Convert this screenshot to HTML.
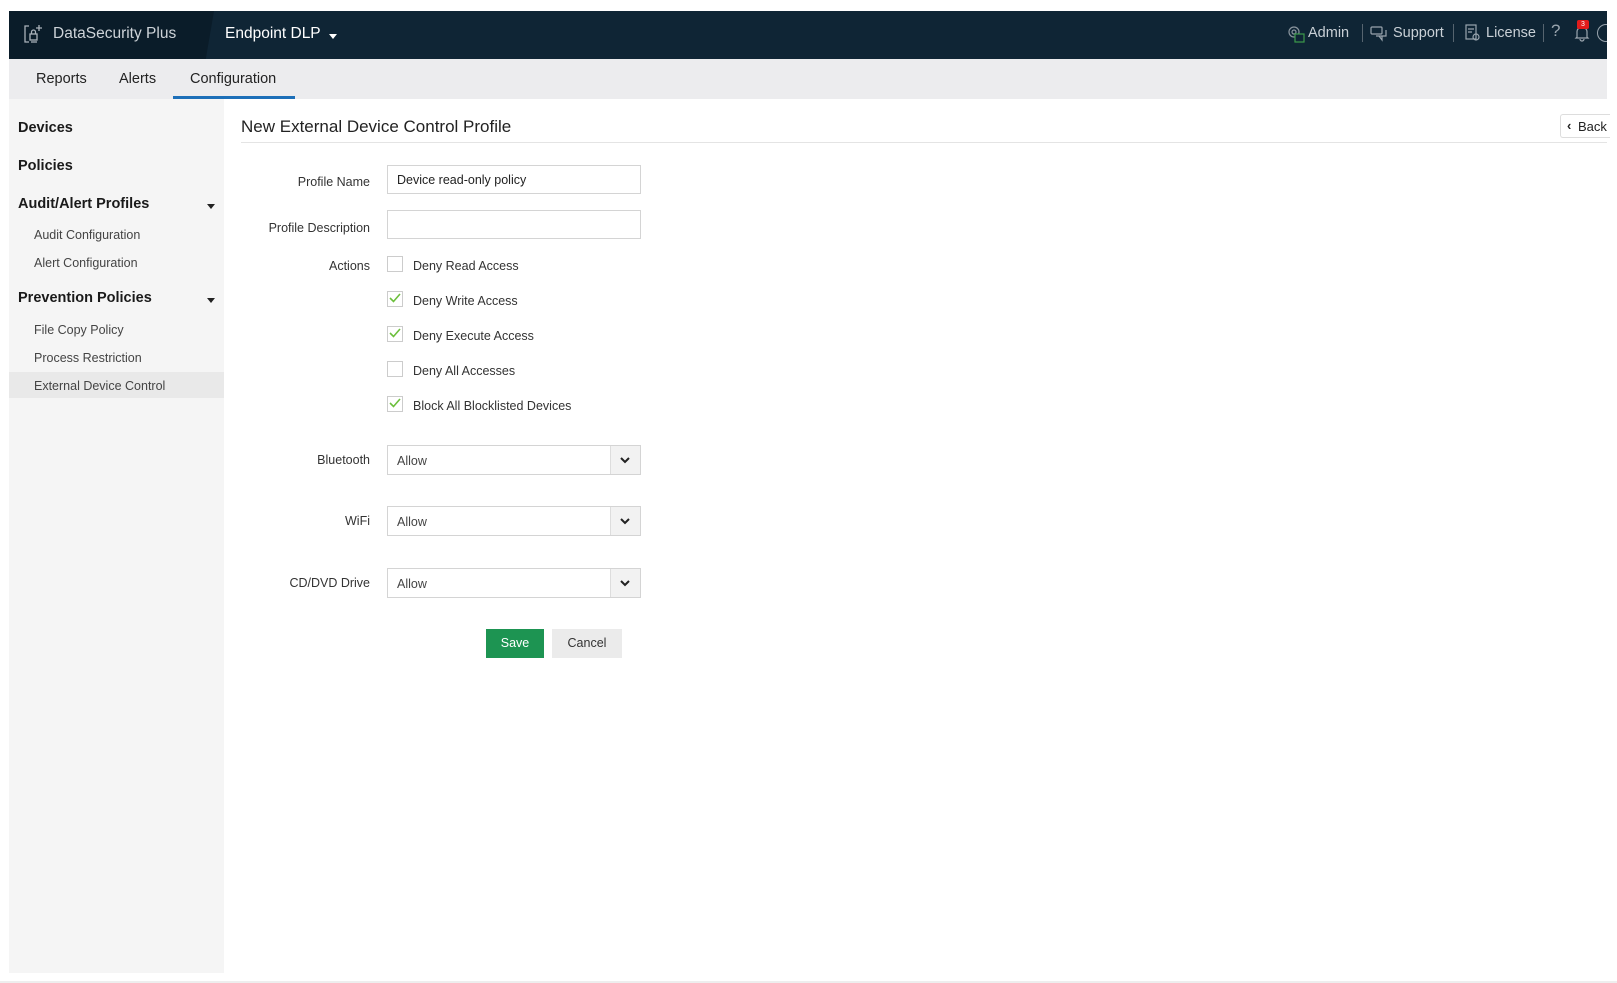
<!DOCTYPE html>
<html><head><style>
*{margin:0;padding:0;box-sizing:border-box}
body{width:1617px;height:983px;background:#fff;font-family:"Liberation Sans",sans-serif;position:relative;overflow:hidden;color:#222}
.a{position:absolute;white-space:nowrap}
.top{left:9px;top:11px;width:1598px;height:48px;background:#0f2535}
.logo{left:9px;top:11px;width:205px;height:48px;background:#0a1c29;clip-path:polygon(0 0,100% 0,96% 100%,0 100%)}
.nav{left:9px;top:59px;width:1598px;height:40px;background:#ececee}
.side{left:9px;top:99px;width:215px;height:874px;background:#f5f5f5}
.sh{font-size:14.5px;font-weight:bold;color:#1a1a1a;left:18px}
.si{font-size:12.5px;color:#444;left:34px}
.lbl{font-size:12.5px;color:#333;right:1247px;text-align:right}
.in{left:387px;width:254px;height:29px;border:1px solid #d4d4d4;background:#fff;font-size:12.5px;padding:7px 9px;color:#222}
.cb{left:387px;width:16px;height:16px;border:1px solid #ccc;background:#fff}
.cl{left:413px;font-size:12.5px;color:#333}
.sel{left:387px;width:254px;height:30px;border:1px solid #d4d4d4;background:#fff;font-size:12.5px;padding:8px 9px;color:#444}
.sel i{position:absolute;right:0;top:0;width:30px;height:28px;background:#f2f2f2;border-left:1px solid #ddd}
.tri{width:0;height:0;border-left:4px solid transparent;border-right:4px solid transparent;border-top:5px solid #222}
</style></head><body>
<div class="a top"></div><div class="a logo"></div>
<svg class="a" style="left:23px;top:23px" width="22" height="22" viewBox="0 0 22 22" fill="none" stroke="#aab2ba" stroke-width="1.3"><path d="M6 3H2v16h4M8 19h6"/><rect x="7" y="11" width="7" height="6"/><path d="M8.5 11V9a2 2 0 0 1 4 0v2"/><path d="M16 2v6M13 5h6"/></svg>
<div class="a" style="left:53px;top:25px;font-size:15.5px;color:#cdd3d8">DataSecurity Plus</div>
<div class="a" style="left:225px;top:25px;font-size:15.5px;color:#fff">Endpoint DLP</div>
<div class="a tri" style="left:329px;top:34px;border-top-color:#fff"></div>
<svg class="a" style="left:1286px;top:24px" width="20" height="20" viewBox="0 0 20 20" fill="none" stroke="#8a959e" stroke-width="1.2"><circle cx="8" cy="8" r="5"/><circle cx="8" cy="8" r="2"/><rect x="9" y="10" width="9" height="8" fill="#0f2535" stroke="#3c9a4a"/></svg>
<div class="a" style="left:1308px;top:25px;font-size:14.5px;color:#c9d0d6">Admin</div>
<div class="a" style="left:1362px;top:24px;width:1px;height:18px;background:#56646f"></div>
<svg class="a" style="left:1370px;top:26px" width="19" height="16" viewBox="0 0 19 16" fill="none" stroke="#9aa5ae" stroke-width="1.2"><rect x="1" y="1" width="11" height="7" rx="1"/><path d="M6 10h10V4M12 10v4l-3-4"/></svg>
<div class="a" style="left:1393px;top:25px;font-size:14.5px;color:#c9d0d6">Support</div>
<div class="a" style="left:1453px;top:24px;width:1px;height:18px;background:#56646f"></div>
<svg class="a" style="left:1465px;top:24px" width="16" height="19" viewBox="0 0 16 19" fill="none" stroke="#9aa5ae" stroke-width="1.2"><rect x="1" y="1" width="10" height="14"/><path d="M3 5h6M3 8h4"/><circle cx="11" cy="13" r="3"/></svg>
<div class="a" style="left:1486px;top:25px;font-size:14.5px;color:#c9d0d6">License</div>
<div class="a" style="left:1543px;top:24px;width:1px;height:18px;background:#56646f"></div>
<div class="a" style="left:1551px;top:21px;font-size:17px;color:#9aa5ae">?</div>
<svg class="a" style="left:1574px;top:24px" width="16" height="18" viewBox="0 0 16 18" fill="none" stroke="#9aa5ae" stroke-width="1.2"><path d="M3 13V8a5 5 0 0 1 10 0v5l1 1H2zM6 15a2 2 0 0 0 4 0"/></svg>
<div class="a" style="left:1577px;top:20px;width:12px;height:9px;background:#e21b1b;border-radius:2px;font-size:7px;color:#fff;text-align:center;line-height:9px">3</div>
<div class="a" style="left:1597px;top:24px;width:18px;height:18px;border:1.3px solid #9aa5ae;border-radius:50%"></div>
<div class="a" style="left:1607px;top:0;width:10px;height:983px;background:#fff"></div>

<div class="a nav"></div>
<div class="a" style="left:36px;top:71px;font-size:14.5px;color:#222">Reports</div>
<div class="a" style="left:119px;top:71px;font-size:14.5px;color:#222">Alerts</div>
<div class="a" style="left:190px;top:71px;font-size:14.5px;color:#222">Configuration</div>
<div class="a" style="left:173px;top:96px;width:122px;height:3px;background:#1d6fb8"></div>

<div class="a side"></div>
<div class="a sh" style="top:120px">Devices</div>
<div class="a sh" style="top:158px">Policies</div>
<div class="a sh" style="top:196px">Audit/Alert Profiles</div>
<div class="a tri" style="left:207px;top:204px"></div>
<div class="a si" style="top:228px">Audit Configuration</div>
<div class="a si" style="top:256px">Alert Configuration</div>
<div class="a sh" style="top:290px">Prevention Policies</div>
<div class="a tri" style="left:207px;top:298px"></div>
<div class="a si" style="top:323px">File Copy Policy</div>
<div class="a si" style="top:351px">Process Restriction</div>
<div class="a" style="left:9px;top:372px;width:215px;height:26px;background:#e9e9e9"></div>
<div class="a si" style="top:379px">External Device Control</div>

<div class="a" style="left:241px;top:117px;font-size:17px;color:#222">New External Device Control Profile</div>
<div class="a" style="left:241px;top:142px;width:1366px;height:1px;background:#e4e4e4"></div>
<div class="a" style="left:1560px;top:114px;width:50px;height:24px;border:1px solid #ddd;border-right:none;border-radius:3px 0 0 3px;background:#fff;font-size:13px;padding:4px 0 0 17px;color:#222">Back</div>
<div class="a" style="left:1567px;top:118px;font-size:13px;font-weight:bold">&#8249;</div>

<div class="a lbl" style="top:175px">Profile Name</div>
<div class="a in" style="top:165px">Device read-only policy</div>
<div class="a lbl" style="top:221px">Profile Description</div>
<div class="a in" style="top:210px"></div>
<div class="a lbl" style="top:259px">Actions</div>

<div class="a cb" style="top:256px"></div><div class="a cl" style="top:259px">Deny Read Access</div>
<div class="a cb" style="top:291px"></div><div class="a cl" style="top:294px">Deny Write Access</div>
<div class="a cb" style="top:326px"></div><div class="a cl" style="top:329px">Deny Execute Access</div>
<div class="a cb" style="top:361px"></div><div class="a cl" style="top:364px">Deny All Accesses</div>
<div class="a cb" style="top:396px"></div><div class="a cl" style="top:399px">Block All Blocklisted Devices</div>
<svg class="a" style="left:388px;top:291px" width="14" height="14"><path d="M2 7l3.5 3.5L12 3" fill="none" stroke="#6cbf3c" stroke-width="1.6"/></svg>
<svg class="a" style="left:388px;top:326px" width="14" height="14"><path d="M2 7l3.5 3.5L12 3" fill="none" stroke="#6cbf3c" stroke-width="1.6"/></svg>
<svg class="a" style="left:388px;top:396px" width="14" height="14"><path d="M2 7l3.5 3.5L12 3" fill="none" stroke="#6cbf3c" stroke-width="1.6"/></svg>

<div class="a lbl" style="top:453px">Bluetooth</div>
<div class="a sel" style="top:445px">Allow<i></i></div>
<div class="a lbl" style="top:514px">WiFi</div>
<div class="a sel" style="top:506px">Allow<i></i></div>
<div class="a lbl" style="top:576px">CD/DVD Drive</div>
<div class="a sel" style="top:568px">Allow<i></i></div>
<svg class="a" style="left:620px;top:456px" width="10" height="8"><path d="M1 2l4 4 4-4" fill="none" stroke="#222" stroke-width="2"/></svg>
<svg class="a" style="left:620px;top:517px" width="10" height="8"><path d="M1 2l4 4 4-4" fill="none" stroke="#222" stroke-width="2"/></svg>
<svg class="a" style="left:620px;top:579px" width="10" height="8"><path d="M1 2l4 4 4-4" fill="none" stroke="#222" stroke-width="2"/></svg>

<div class="a" style="left:486px;top:629px;width:58px;height:29px;background:#1d9452;color:#fff;font-size:12.5px;text-align:center;line-height:29px">Save</div>
<div class="a" style="left:552px;top:629px;width:70px;height:29px;background:#ebebeb;color:#333;font-size:12.5px;text-align:center;line-height:29px">Cancel</div>
<div class="a" style="left:0;top:981px;width:1617px;height:2px;background:#eee"></div>
</body></html>
